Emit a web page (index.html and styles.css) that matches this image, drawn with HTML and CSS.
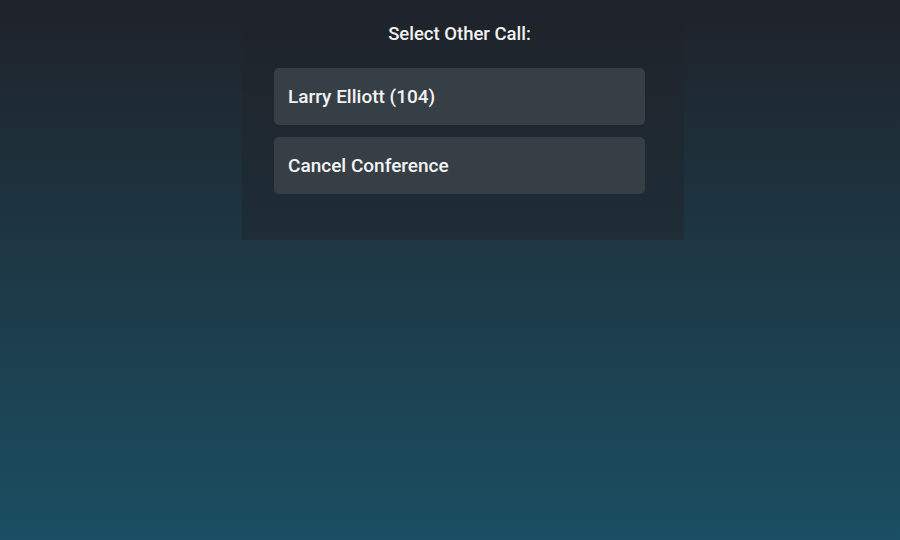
FILE: index.html
```html
<!DOCTYPE html>
<html>
<head>
<meta charset="utf-8">
<link rel="stylesheet" href="styles.css">
</head>
<body>
<div class="screen">
  <div class="panel">
    <div class="title">Select Other Call:</div>
    <div class="list">
      <div class="option">Larry Elliott (104)</div>
      <div class="option">Cancel Conference</div>
    </div>
  </div>
</div>
</body>
</html>
```
FILE: styles.css
```css
html, body {
  margin: 0;
  padding: 0;
}
body {
  width: 900px;
  height: 540px;
  overflow: hidden;
  font-family: Roboto, "Liberation Sans", sans-serif;
}
.screen {
  width: 900px;
  height: 540px;
  background: linear-gradient(to bottom, #1f222a 0%, #1d3440 40%, #1b4f63 100%);
  display: flex;
  justify-content: center;
  align-items: flex-start;
  padding-left: 26px;
  box-sizing: border-box;
}
.panel {
  width: 442px;
  height: 240px;
  background: rgba(32, 36, 42, 0.5);
  box-sizing: border-box;
  padding: 22px 39px 0 32px;
}
.title {
  color: #f2f2f2;
  font-size: 18.5px;
  font-weight: 500;
  text-align: center;
  line-height: 24px;
}
.list {
  margin-top: 22px;
  display: flex;
  flex-direction: column;
  gap: 12px;
}
.option {
  height: 57px;
  background: #373f46;
  border-radius: 5px;
  color: #f4f4f4;
  font-size: 19px;
  font-weight: 500;
  display: flex;
  align-items: center;
  padding-left: 14px;
}
```
